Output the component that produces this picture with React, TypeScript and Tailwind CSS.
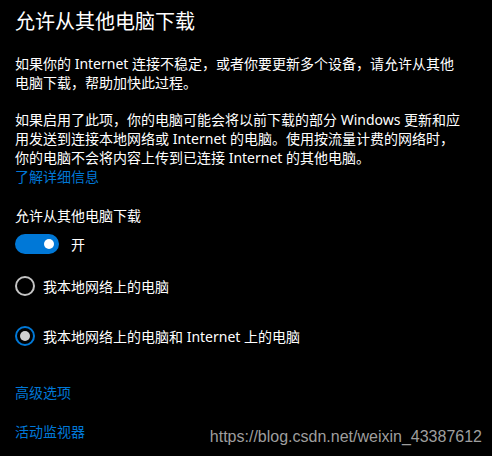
const font = { fontFamily: '"Noto Sans", "Noto Sans CJK SC", sans-serif' };

const Radio = ({ checked, label }: { checked: boolean; label: string }) => (
  <div className="flex items-center h-[20px]">
    <span
      className={`w-[20px] h-[20px] rounded-full border-2 flex items-center justify-center ${
        checked ? "border-[#0078d7]" : "border-[#c4c4c4]"
      }`}
    >
      {checked && <span className="w-[10px] h-[10px] rounded-full bg-[#cfcfcf]" />}
    </span>
    <span className="ml-[8px] text-[14px] leading-[19px] text-white">{label}</span>
  </div>
);

export default function App() {
  return (
    <div className="relative w-[492px] h-[456px] bg-black text-white overflow-hidden" style={font}>
      <div className="pl-[15px] pt-[8px]">
        <h1 className="text-[20px] leading-[28px] font-normal">允许从其他电脑下载</h1>

        <p className="mt-[18px] text-[14px] leading-[19px]">
          <span className="block whitespace-nowrap">如果你的 Internet 连接不稳定，或者你要更新多个设备，请允许从其他</span>
          <span className="block whitespace-nowrap">电脑下载，帮助加快此过程。</span>
        </p>

        <p className="mt-[18px] text-[14px] leading-[19px]">
          <span className="block whitespace-nowrap">如果启用了此项，你的电脑可能会将以前下载的部分 Windows 更新和应</span>
          <span className="block whitespace-nowrap">用发送到连接本地网络或 Internet 的电脑。使用按流量计费的网络时，</span>
          <span className="block whitespace-nowrap">你的电脑不会将内容上传到已连接 Internet 的其他电脑。</span>
        </p>
        <a className="block text-[14px] leading-[19px] text-[#0078d7]">了解详细信息</a>

        <div className="mt-[20px] text-[14px] leading-[19px]">允许从其他电脑下载</div>

        <div className="mt-[9px] flex items-center h-[20px]">
          <span className="w-[44px] h-[20px] rounded-full bg-[#0078d7] flex items-center justify-end pr-[5px]">
            <span className="w-[10px] h-[10px] rounded-full bg-white" />
          </span>
          <span className="ml-[12px] text-[14px] leading-[19px]">开</span>
        </div>

        <div className="mt-[22px]">
          <Radio checked={false} label="我本地网络上的电脑" />
        </div>
        <div className="mt-[30px]">
          <Radio checked label="我本地网络上的电脑和 Internet 上的电脑" />
        </div>

        <a className="block mt-[37px] text-[14px] leading-[19px] text-[#0078d7]">高级选项</a>
        <a className="block mt-[20px] text-[14px] leading-[19px] text-[#0078d7]">活动监视器</a>
      </div>

      <div
        className="absolute right-[10px] top-[428px] text-[16px] leading-[18px] text-[#9e9e9e]"
        style={{ fontFamily: '"Liberation Sans", Arial, sans-serif' }}
      >
        https://blog.csdn.net/weixin_43387612
      </div>
    </div>
  );
}
